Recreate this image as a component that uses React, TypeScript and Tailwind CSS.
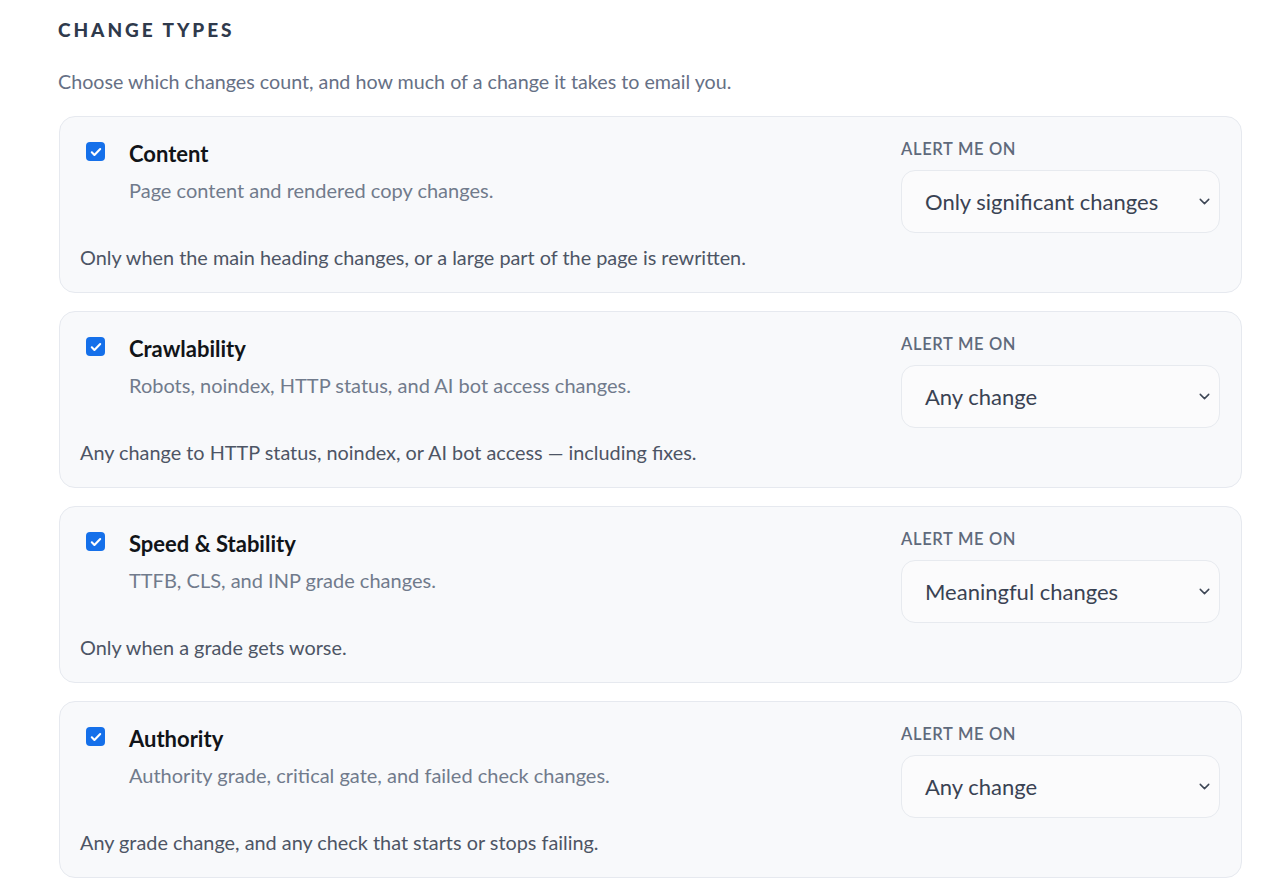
import { ChevronDown } from "lucide-react"

const types = [
  {
    title: "Content",
    desc: "Page content and rendered copy changes.",
    level: "Only significant changes",
    note: "Only when the main heading changes, or a large part of the page is rewritten.",
  },
  {
    title: "Crawlability",
    desc: "Robots, noindex, HTTP status, and AI bot access changes.",
    level: "Any change",
    note: "Any change to HTTP status, noindex, or AI bot access \u2014 including fixes.",
  },
  {
    title: "Speed & Stability",
    desc: "TTFB, CLS, and INP grade changes.",
    level: "Meaningful changes",
    note: "Only when a grade gets worse.",
  },
  {
    title: "Authority",
    desc: "Authority grade, critical gate, and failed check changes.",
    level: "Any change",
    note: "Any grade change, and any check that starts or stops failing.",
  },
]

function Check() {
  return (
    <span className="mt-[2px] ml-[6px] flex h-[19px] w-[19px] shrink-0 items-center justify-center rounded-[4px] bg-[#1570ea]">
      <svg viewBox="0 0 16 16" className="h-[14px] w-[14px]" fill="none">
        <path d="M3.2 8.4l3 3L12.8 4.6" stroke="white" strokeWidth="2.4" strokeLinecap="round" strokeLinejoin="round" />
      </svg>
    </span>
  )
}

export default function App() {
  return (
    <div className="min-h-screen bg-white px-[58px] pt-[19px] font-['Lato',sans-serif]">
      <h2 className="text-[19px] font-black leading-[22px] tracking-[0.155em] text-[#2f3a4c]">CHANGE TYPES</h2>
      <p className="mt-[27px] text-[19.7px] leading-[28px] text-[#667085]">
        Choose which changes count, and how much of a change it takes to email you.
      </p>

      <div className="mt-[20px] flex flex-col gap-[18px]">
        {types.map((t) => (
          <div
            key={t.title}
            className="ml-px w-[1183px] rounded-[16px] border border-[#e6e9ef] bg-[#f8f9fb] px-[20px] pt-[21px] pb-[21px]"
          >
            <div className="flex items-start justify-between">
              <div className="flex gap-[24px] pt-[2px]">
                <Check />
                <div>
                  <div className="text-[22px] font-bold leading-[28px] text-[#111418]">{t.title}</div>
                  <div className="mt-[8px] text-[20px] leading-[28px] text-[#717b8c]">{t.desc}</div>
                </div>
              </div>
              <div className="mr-px w-[319px] pt-px">
                <div className="text-[16.5px] font-semibold leading-[20px] tracking-[0.04em] text-[#5f6a7b]">ALERT ME ON</div>
                <div className="mt-[11px] flex h-[63px] items-center justify-between rounded-[14px] border border-[#e7eaef] bg-[#fbfbfc] pl-[23px] pr-[6px]">
                  <span className="text-[22px] leading-[28px] text-[#394253]">{t.level}</span>
                  <ChevronDown className="h-[17px] w-[17px] text-[#3d4655]" strokeWidth={2.1} />
                </div>
              </div>
            </div>
            <p className="mt-[10px] text-[19.85px] leading-[28px] text-[#4d5565]">{t.note}</p>
          </div>
        ))}
      </div>
    </div>
  )
}
